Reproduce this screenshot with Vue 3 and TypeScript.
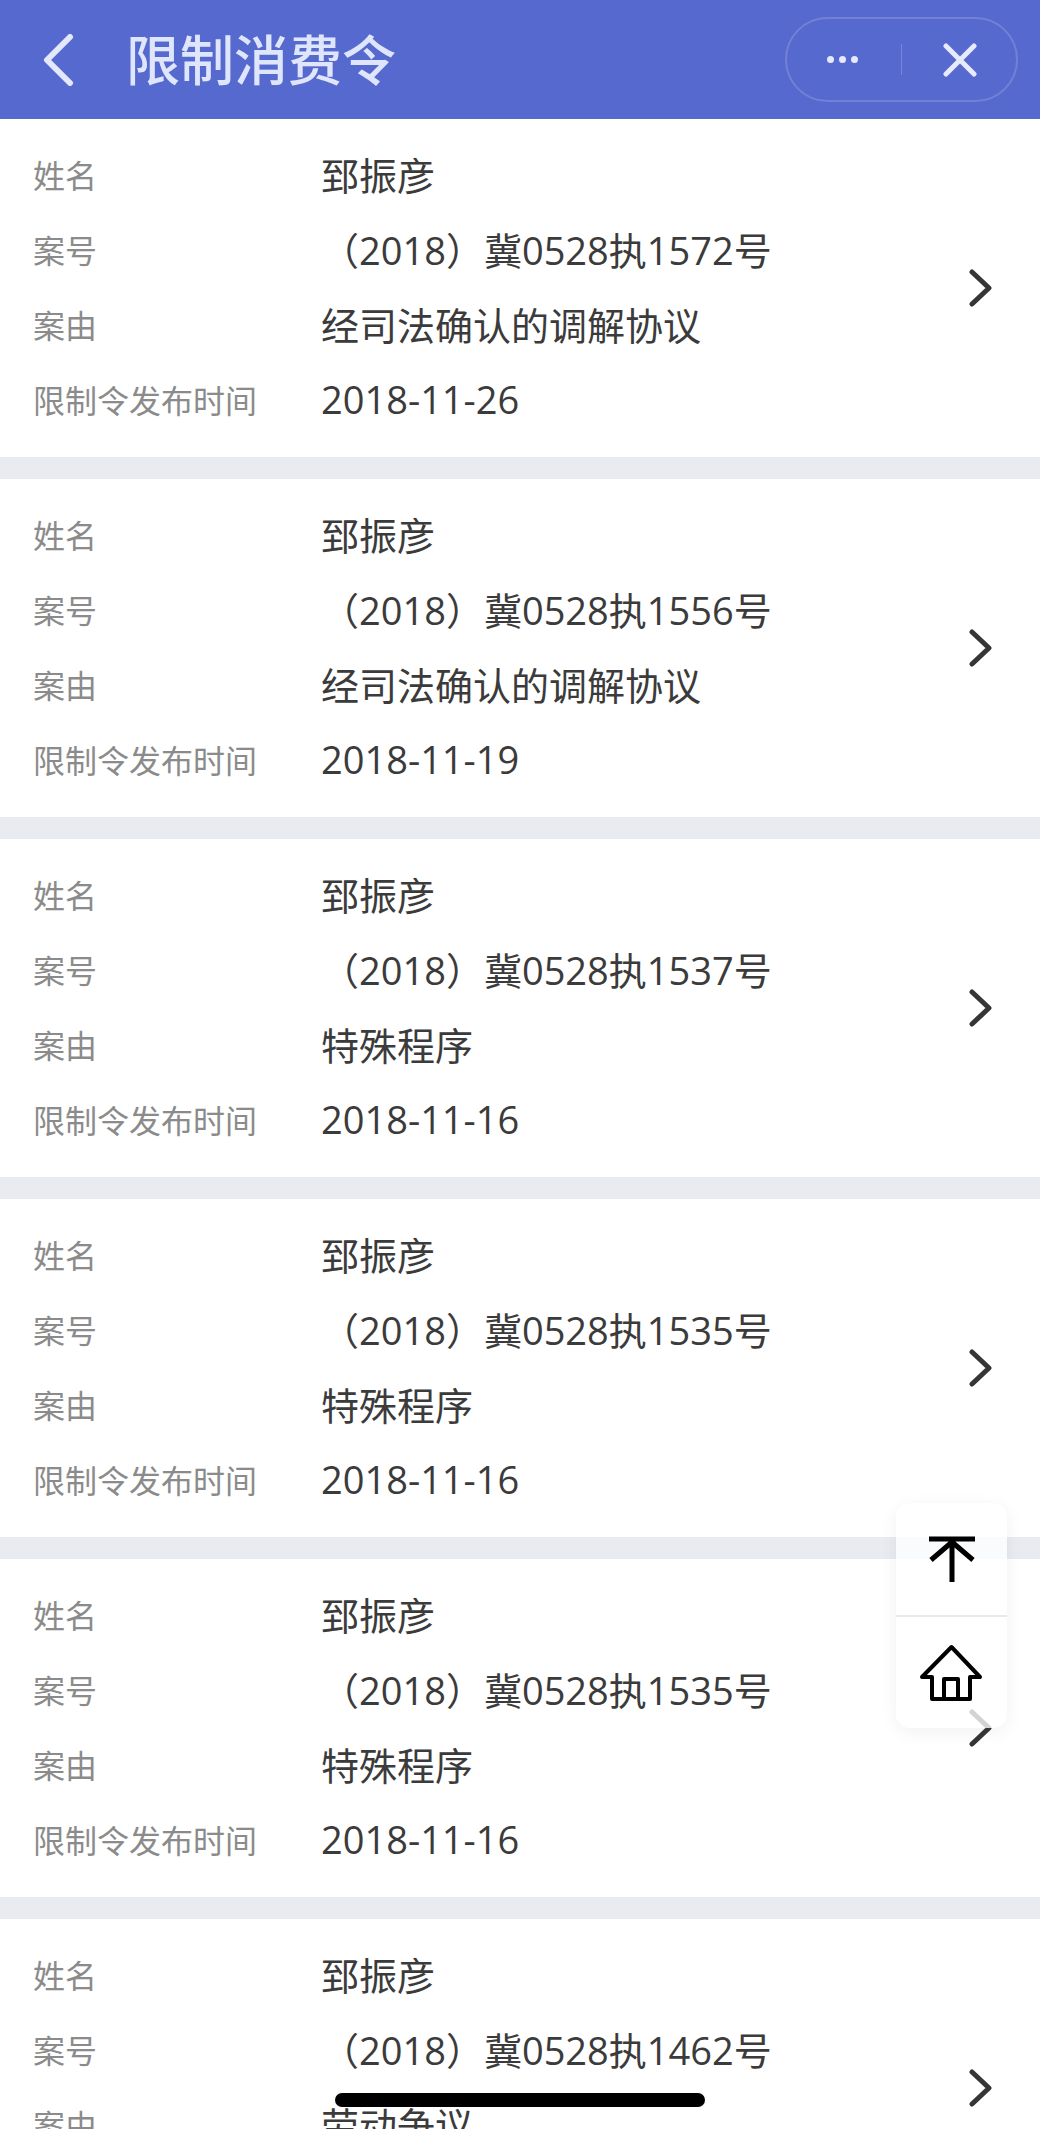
<script setup lang="ts">
interface CaseItem {
  name: string
  caseNo: string
  reason: string
  date: string
}

const cases: CaseItem[] = [
  { name: '郅振彦', caseNo: '（2018）冀0528执1572号', reason: '经司法确认的调解协议', date: '2018-11-26' },
  { name: '郅振彦', caseNo: '（2018）冀0528执1556号', reason: '经司法确认的调解协议', date: '2018-11-19' },
  { name: '郅振彦', caseNo: '（2018）冀0528执1537号', reason: '特殊程序', date: '2018-11-16' },
  { name: '郅振彦', caseNo: '（2018）冀0528执1535号', reason: '特殊程序', date: '2018-11-16' },
  { name: '郅振彦', caseNo: '（2018）冀0528执1535号', reason: '特殊程序', date: '2018-11-16' },
  { name: '郅振彦', caseNo: '（2018）冀0528执1462号', reason: '劳动争议', date: '' }
]
</script>

<template>
  <div class="page">
    <header class="nav">
      <svg class="back" width="32" height="52" viewBox="0 0 32 52">
        <path d="M28 3 L5 26 L28 49" />
      </svg>
      <h1 class="title">限制消费令</h1>
      <div class="capsule">
        <div class="dots"><i></i><i></i><i></i></div>
        <span class="capsule-line"></span>
        <svg class="close" width="34" height="34" viewBox="0 0 34 34">
          <path d="M3 3 L31 31 M31 3 L3 31" />
        </svg>
      </div>
    </header>

    <section v-for="(item, i) in cases" :key="i" class="card">
      <div class="info">
        <div class="row"><span class="label">姓名</span><span class="value">{{ item.name }}</span></div>
        <div class="row"><span class="label">案号</span><span class="value">{{ item.caseNo }}</span></div>
        <div class="row"><span class="label">案由</span><span class="value">{{ item.reason }}</span></div>
        <div class="row"><span class="label">限制令发布时间</span><span class="value">{{ item.date }}</span></div>
      </div>
      <svg class="arrow" width="24" height="38" viewBox="0 0 24 38">
        <path d="M3 3 L20 19 L3 35" />
      </svg>
    </section>

    <aside class="float-panel">
      <div class="float-btn">
        <svg width="64" height="64" viewBox="0 0 64 64">
          <path d="M9 12 H55 M32 12 V55 M32 15 L11 33 M32 15 L53 33" />
        </svg>
      </div>
      <div class="float-btn">
        <svg width="64" height="64" viewBox="0 0 64 64">
          <path class="thin" d="M31.5 7 L60 37 H50 V59 H12 V37 H2 Z M24 59 V39 H38 V59" />
        </svg>
      </div>
    </aside>

    <div class="home-bar"></div>
  </div>
</template>

<style>
html,
body {
  margin: 0;
  background: #fff;
}
</style>

<style scoped>
.page {
  position: relative;
  width: 1040px;
  height: 2129px;
  overflow: hidden;
  background: #e9ebf1;
  font-family: "Open Sans", "Noto Sans CJK SC", sans-serif;
}

.nav {
  display: flex;
  align-items: center;
  height: 119px;
  padding: 0 22px 0 42px;
  box-sizing: border-box;
  background: #5669cf;
}

.back path {
  fill: none;
  stroke: #e3e8fb;
  stroke-width: 6;
  stroke-linecap: round;
  stroke-linejoin: round;
}

.title {
  margin: 0 0 0 52px;
  flex: 1;
  font-size: 54px;
  font-weight: 500;
  line-height: 1;
  color: #dfe5fb;
}

.capsule {
  display: flex;
  align-items: center;
  width: 233px;
  height: 85px;
  box-sizing: border-box;
  padding-left: 40px;
  border: 2px solid rgba(255, 255, 255, 0.16);
  border-radius: 43px;
}

.dots {
  display: flex;
  gap: 5px;
}

.dots i {
  width: 7px;
  height: 7px;
  border-radius: 50%;
  background: #e6eafb;
}

.capsule-line {
  width: 1px;
  height: 31px;
  margin: 0 41px 0 43px;
  background: rgba(255, 255, 255, 0.2);
}

.close path {
  fill: none;
  stroke: #e6eafb;
  stroke-width: 5;
  stroke-linecap: round;
}

.card {
  display: flex;
  align-items: center;
  justify-content: space-between;
  height: 338px;
  margin-bottom: 22px;
  padding: 0 47px 0 33px;
  box-sizing: border-box;
  background: #fff;
}

.info {
  display: flex;
  flex-direction: column;
  margin-bottom: 4px;
}

.row {
  display: flex;
  align-items: center;
  height: 75px;
}

.label {
  width: 288px;
  font-size: 32px;
  color: #8b8b8b;
}

.value {
  font-size: 38px;
  color: #3b3b3b;
  white-space: nowrap;
}

.arrow path {
  fill: none;
  stroke: #363636;
  stroke-width: 5;
  stroke-linecap: round;
  stroke-linejoin: round;
}

.float-panel {
  position: absolute;
  top: 1503px;
  left: 896px;
  display: flex;
  flex-direction: column;
  width: 111px;
  height: 225px;
  border-radius: 14px;
  background: rgba(255, 255, 255, 0.78);
  box-shadow: 0 4px 18px rgba(0, 0, 0, 0.06);
}

.float-btn {
  flex: 1;
  display: flex;
  align-items: center;
  justify-content: center;
}

.float-btn + .float-btn {
  border-top: 2px solid #e9e9e9;
}

.float-btn path {
  fill: none;
  stroke: #000;
  stroke-width: 5;
  stroke-linejoin: round;
}

.float-btn path.thin {
  stroke-width: 4;
}

.home-bar {
  position: absolute;
  top: 2093px;
  left: 335px;
  width: 370px;
  height: 14px;
  border-radius: 7px;
  background: #000;
}
</style>
